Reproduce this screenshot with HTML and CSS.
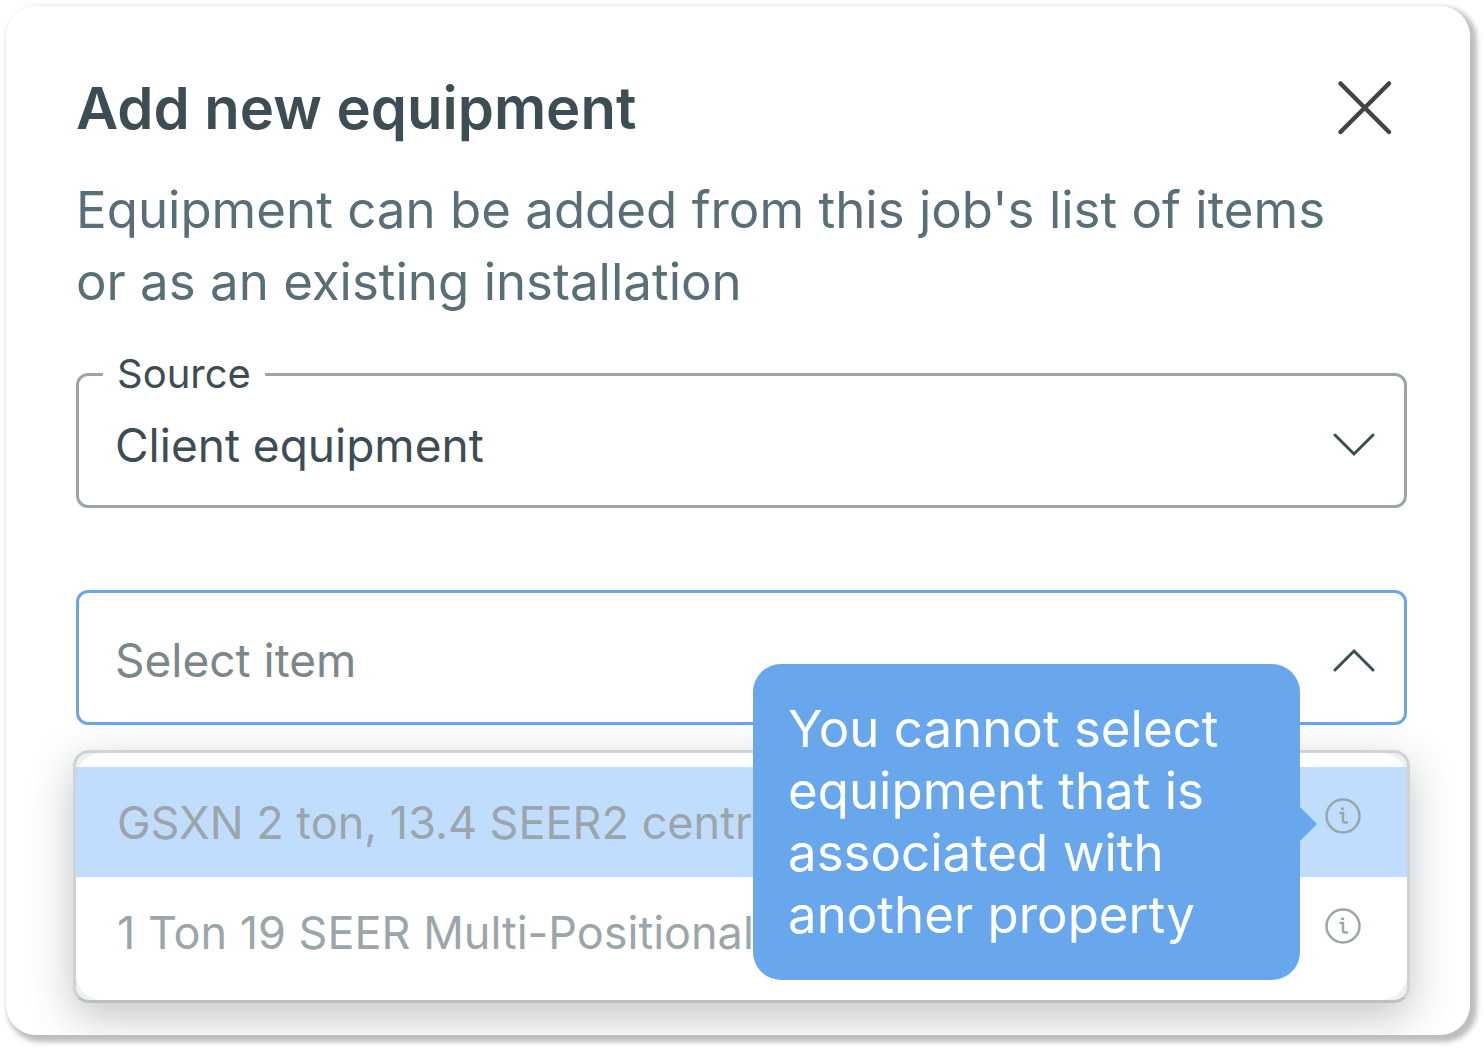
FILE: index.html
```
<!DOCTYPE html>
<html lang="en">
<head>
	<meta charset="utf-8">
	<title>Add new equipment</title>
	<link rel="stylesheet" href="styles.css">
</head>
<body>
	<main class="modal">
		<header class="modal-header">
			<h1>Add new equipment</h1>
			<button class="close" type="button" aria-label="Close">
				<svg viewBox="0 0 56 56" width="56" height="56">
					<path d="M3.5 3.5L52 52M52 3.5L3.5 52"/>
				</svg>
			</button>
		</header>
		<p class="intro">Equipment can be added from this job's list of items or as an existing installation</p>

		<!-- source -->
		<fieldset class="field field-labelled">
			<legend><label for="source">Source</label></legend>
			<div class="control">
				<select id="source">
					<option>Client equipment</option>
				</select>
				<svg class="chevron" viewBox="0 0 42 24" width="42" height="24">
					<path d="M2 2L21 21L40 2"/>
				</svg>
			</div>
		</fieldset>

		<!-- item, opened -->
		<div class="field field-open">
			<div class="control">
				<select id="item" class="placeholder" aria-label="Select item">
					<option>Select item</option>
				</select>
				<svg class="chevron" viewBox="0 0 42 24" width="42" height="24">
					<path d="M2 22L21 3L40 22"/>
				</svg>
			</div>
		</div>
		<ul class="menu">
			<li class="option active">
				<span class="option-name">GSXN 2 ton, 13.4 SEER2 central</span>
				<button class="info" type="button" aria-label="More info" aria-describedby="tip">
					<svg viewBox="0 0 36 36" width="36" height="36">
						<circle cx="18" cy="18" r="16.5"/>
						<path d="M15.5 15H18V22.5Q18 24.5 20 24.5H22"/>
						<path class="dot" d="M16 9.5H19V12H16Z"/>
					</svg>
				</button>
				<div id="tip" class="tooltip" role="tooltip">You cannot select equipment that is associated with another property</div>
			</li>
			<li class="option">
				<span class="option-name">1 Ton 19 SEER Multi-Positional</span>
				<button class="info" type="button" aria-label="More info">
					<svg viewBox="0 0 36 36" width="36" height="36">
						<circle cx="18" cy="18" r="16.5"/>
						<path d="M15.5 15H18V22.5Q18 24.5 20 24.5H22"/>
						<path class="dot" d="M16 9.5H19V12H16Z"/>
					</svg>
				</button>
			</li>
		</ul>
	</main>
</body>
</html>
```
FILE: styles.css
```
* { box-sizing: border-box; }
body {
	min-height: 100vh;
	margin: 0;
	padding: 6px 14px 14px 6px;
	background: #fff;
	color: #3d4d54;
	font-family: Inter, "Open Sans", sans-serif;
}
button {
	padding: 0;
	border: 0;
	background: none;
	cursor: pointer;
}
svg {
	display: block;
	fill: none;
	stroke-linecap: round;
}

.modal {
	overflow: hidden;
	padding: 66px 63px 32px 70px;
	border-radius: 30px;
	background: #fff;
	box-shadow: 4px 4px 5px 3px rgba(0, 0, 0, .26);
}
.modal-header {
	display: flex;
	align-items: center;
	justify-content: space-between;
}
h1 {
	margin: 0;
	font-size: 58px;
	font-weight: 600;
	line-height: 72px;
}
.close {
	display: flex;
	justify-content: center;
	width: 84px;
	stroke: #444;
	stroke-width: 4.5;
}
.intro {
	margin: 30px 0 34px;
	padding-right: 50px;
	color: #586f78;
	font-size: 51px;
	line-height: 72px;
}

/* select boxes */
.field {
	margin: 0;
	padding: 0;
	border: 3px solid #9ca6aa;
	border-radius: 12px;
}
.field-labelled { margin-bottom: 82px; }
.field-open { border-color: #69a7ed; }
legend {
	margin-left: 24px;
	padding: 0 14px;
	font-size: 40px;
	line-height: 44px;
}
.control {
	display: grid;
	align-items: center;
	height: 129px;
	padding-top: 4px;
}
.field-labelled .control {
	height: 109px;
	padding: 0 0 12px;
}
.control > * { grid-area: 1 / 1; }
select {
	width: 100%;
	height: 100%;
	padding: 0 90px 0 36px;
	border: 0;
	outline: 0;
	background: none;
	color: #3d4d54;
	font: 46px Inter, "Open Sans", sans-serif;
	appearance: none;
}
.placeholder { color: #7c878b; }
.chevron {
	justify-self: end;
	margin-right: 29px;
	stroke: #3d4d54;
	stroke-width: 3;
	pointer-events: none;
}

/* dropdown list */
.menu {
	position: relative;
	z-index: 0;
	margin: 25px -3px 0;
	padding: 14px 0 13px;
	border: 3px solid #d0d3d3;
	border-bottom-color: #bcc0c0;
	border-radius: 16px;
	background: #eff0f0;
	box-shadow: 0 14px 44px rgba(50, 60, 65, .3);
	list-style: none;
}
.menu::before {			/* rounder white sheet behind the options */
	content: "";
	position: absolute;
	z-index: -1;
	inset: 0;
	border-radius: 26px;
	background: #fff;
}
.option {
	position: relative;
	display: flex;
	align-items: center;
	justify-content: space-between;
	height: 110px;
	padding: 0 46px 0 41px;
	color: #9ca6aa;
	font-size: 45px;
}
.option.active { z-index: 1; background: #c1ddfe; }
.option-name { white-space: nowrap; }
.info {
	padding-bottom: 12px;
	stroke: #9ca6aa;
	stroke-width: 2.5;
}
.dot { fill: #9ca6aa; stroke: none; }
.tooltip {
	position: absolute;
	top: 50%;
	right: 107px;
	width: 547px;
	padding: 34px 35px;
	transform: translateY(-50%);
	border-radius: 28px;
	background: #69a7ed;
	color: #fff;
	font-size: 51px;
	line-height: 62px;
}
.tooltip::after {		/* arrow */
	content: "";
	position: absolute;
	top: 50%;
	left: 100%;
	margin-top: -15px;
	border: 17px solid transparent;
	border-left-color: #69a7ed;
	border-right: 0;
}
```
